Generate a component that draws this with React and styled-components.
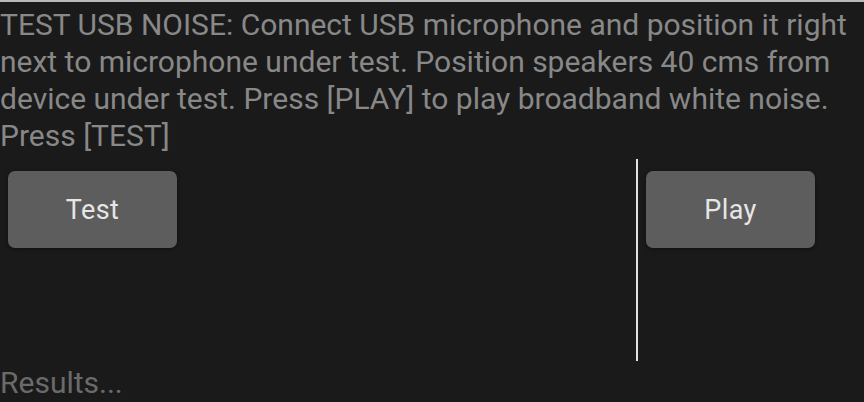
import React from 'react';
import styled, { createGlobalStyle } from 'styled-components';

const Global = createGlobalStyle`
  *, *::before, *::after {
    box-sizing: border-box;
  }
  html, body {
    margin: 0;
    padding: 0;
    background: #1a1a1a;
  }
  body {
    font-family: Roboto, "Noto Sans", sans-serif;
  }
`;

const Screen = styled.div`
  width: 864px;
  height: 402px;
  overflow: hidden;
  background: #1a1a1a;
  border-top: 2px solid #b8b8b8;
  display: flex;
  flex-direction: column;
`;

const Instructions = styled.p`
  margin: 0;
  padding: 4px 0 0 0;
  color: #888888;
  font-size: 30px;
  line-height: 37px;
  height: 152px;
  flex-shrink: 0;
`;

const Controls = styled.div`
  display: flex;
  height: 202px;
  margin-top: 5px;
  flex-shrink: 0;
`;

const Column = styled.div`
  display: flex;
  align-items: flex-start;
  padding: 12px 8px;
  width: ${(p) => p.width};
  border-left: ${(p) => (p.divider ? '2px solid #e2e2e2' : 'none')};
`;

const Button = styled.button`
  width: 169px;
  height: 77px;
  border: none;
  border-radius: 7px;
  background: #5d5d5d;
  color: #e6e6e6;
  font-family: Roboto, "Noto Sans", sans-serif;
  font-size: 27px;
  font-weight: 400;
  letter-spacing: 0.4px;
  box-shadow: 0 1px 4px rgba(0, 0, 0, 0.4);
  cursor: pointer;
`;

const Results = styled.div`
  color: #6a6a6a;
  font-size: 30px;
  line-height: 37px;
  margin-top: 3px;
`;

const App = () => {
  return (
    <>
      <Global />
      <Screen>
        <Instructions>
          TEST USB NOISE: Connect USB microphone and position it right next to
          microphone under test. Position speakers 40 cms from device under
          test. Press [PLAY] to play broadband white noise. Press [TEST]
        </Instructions>
        <Controls>
          <Column width="636px">
            <Button>Test</Button>
          </Column>
          <Column width="228px" divider>
            <Button>Play</Button>
          </Column>
        </Controls>
        <Results>Results...</Results>
      </Screen>
    </>
  );
};

export default App;
